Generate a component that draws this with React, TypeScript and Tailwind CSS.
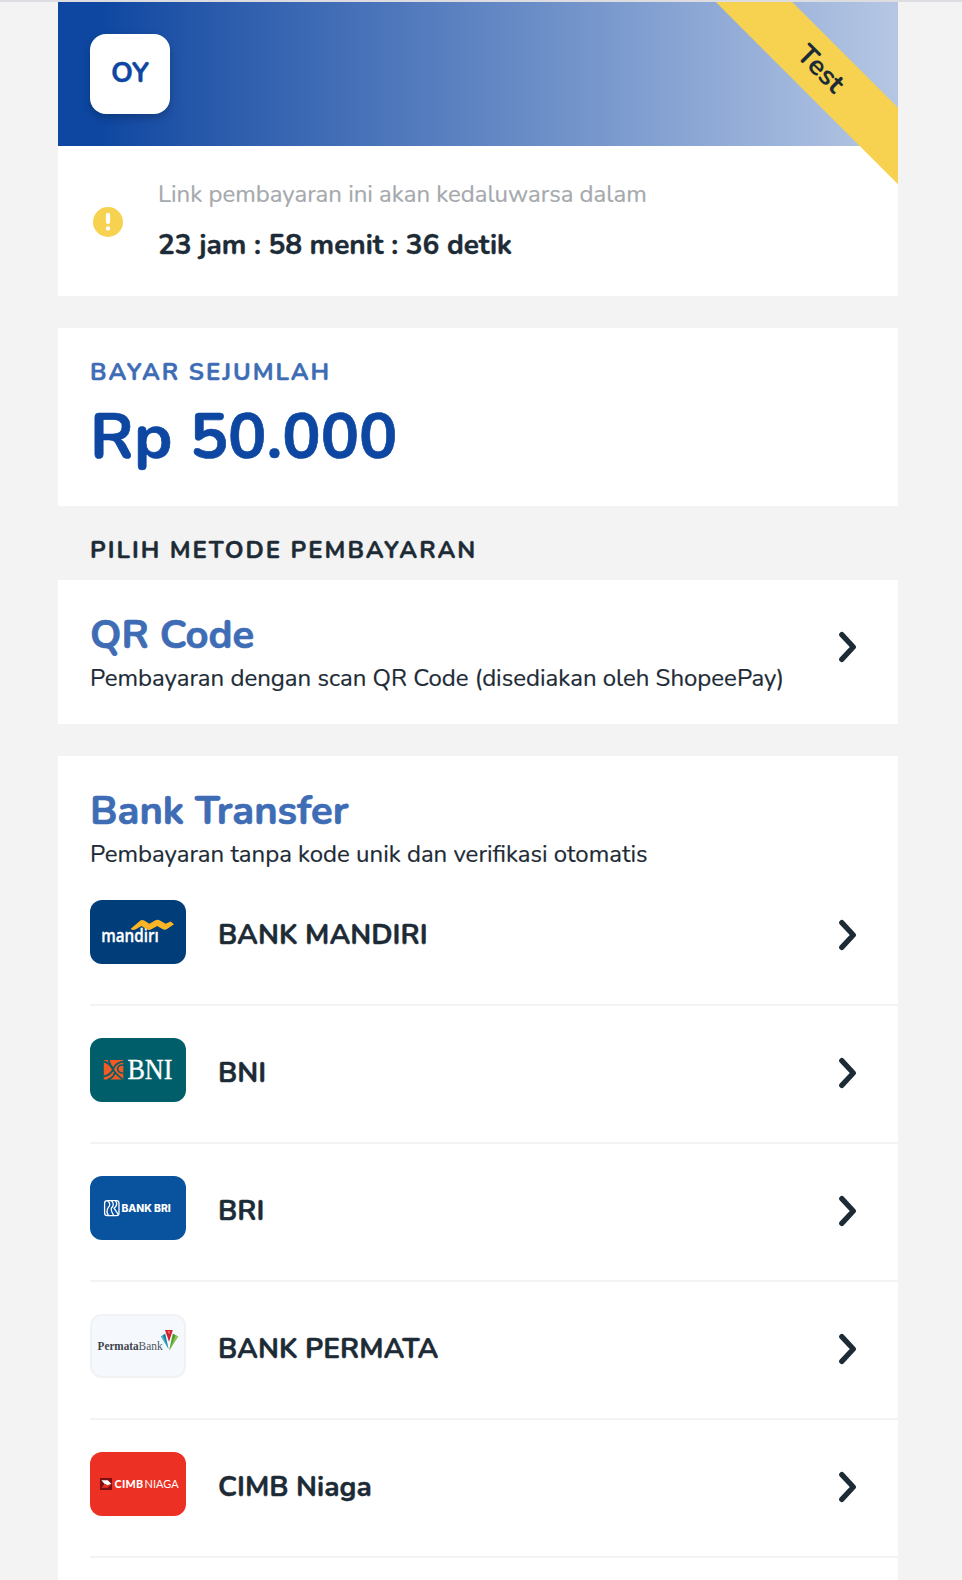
import type { ReactNode } from 'react';

function Chevron() {
  return (
    <svg width="32" height="32" viewBox="0 0 32 32" fill="none" className="shrink-0">
      <path d="M9.8 3.6 21.3 16 9.8 28.4" stroke="#1d2b36" strokeWidth="5.3" strokeLinecap="round" strokeLinejoin="round" />
    </svg>
  );
}

function AlertIcon() {
  return (
    <svg width="30" height="30" viewBox="0 0 30 30" className="mt-0.5 shrink-0">
      <circle cx="15" cy="15" r="15" fill="#f7d250" />
      <path d="M15 7.8v7.2" stroke="#fff" strokeWidth="4.2" strokeLinecap="round" />
      <circle cx="15" cy="21.4" r="2.2" fill="#fff" />
    </svg>
  );
}

function LogoFrame({ className, children }: { className: string; children: ReactNode }) {
  return (
    <div className={`h-16 w-24 shrink-0 overflow-hidden rounded-xl ${className}`}>
      <svg width="96" height="64" viewBox="0 0 96 64">
        {children}
      </svg>
    </div>
  );
}

function MandiriLogo() {
  return (
    <LogoFrame className="bg-[#003d79]">
      <text x="11.2" y="41.6" fontFamily="'Open Sans', sans-serif" fontWeight="600" fontSize="17.5" textLength="57.6" lengthAdjust="spacingAndGlyphs" fill="#fff" stroke="#fff" strokeWidth="0.35">
        mandiri
      </text>
      <path d="M56.9 26.5H70V31.2H56.9Z" fill="#003d79" />
      <path d="M40.5 29 49.5 21.2Q51.8 19.2 54.2 20.6L59.4 23.8 65 20.6Q67.5 19 70 20.4L75.6 23.8 80.6 21.4 84 24.2 77 29Q74.8 30.4 72.4 29L67.2 26 61.4 29.2Q59.2 30.6 56.8 29.2L51.4 26 45.4 29.6Q42.8 30.4 40.5 29Z" fill="#fdb525" />
    </LogoFrame>
  );
}

function BniLogo() {
  return (
    <LogoFrame className="bg-[#005e6a]">
      <path d="M13.8 21.9h19.5v19.5H13.8z" fill="#f15a23" />
      <g fill="none" stroke="#005e6a" strokeWidth="1.7">
        <path d="M13.4 23.4Q19.6 25 22.3 30.4T32.8 41.4" />
        <path d="M18.6 21.5Q19.6 27.4 23.4 31.2" />
        <path d="M13.4 38.6Q21 37 23.4 30.6T34 23.6" />
        <path d="M17.4 41.8Q24.2 39.4 25 33.8" />
        <path d="M33.8 27.2Q28 26.4 27.6 30.6 27.6 35 33.8 35.4" strokeWidth="1.4" />
      </g>
      <text x="37.4" y="41" fontFamily="'Liberation Serif', serif" fontSize="28.5" textLength="45" lengthAdjust="spacingAndGlyphs" fill="#fff" stroke="#fff" strokeWidth="0.3">
        BNI
      </text>
    </LogoFrame>
  );
}

function BriLogo() {
  return (
    <LogoFrame className="bg-[#09529d]">
      <rect x="14.6" y="24.6" width="14.4" height="15" rx="2.6" fill="none" stroke="#fff" strokeWidth="1.3" />
      <g fill="none" stroke="#fff" strokeWidth="1.3">
        <path d="M17.6 24.8Q21.6 28 18.2 31.6 15.6 35.4 18.6 39.6" />
        <path d="M21.4 24.8Q25.2 28.4 21.4 32 20.6 34.6 23.8 39.6" />
        <path d="M25.6 24.8Q28.4 28.8 24 32.2L28.6 38.8" />
      </g>
      <text x="31.4" y="36.2" fontFamily="Inter, sans-serif" fontWeight="800" fontSize="10.2" textLength="49.4" lengthAdjust="spacingAndGlyphs" fill="#fff">
        BANK BRI
      </text>
    </LogoFrame>
  );
}

function PermataLogo() {
  return (
    <LogoFrame className="bg-[#f5f9fd] shadow-[inset_0_0_0_2px_#f1f2f3]">
      <text x="7.6" y="36" fontFamily="'Liberation Serif', serif" fontWeight="700" fontSize="12" textLength="41" lengthAdjust="spacingAndGlyphs" fill="#3d444b">
        Permata
      </text>
      <text x="48.6" y="36" fontFamily="'Liberation Serif', serif" fontSize="12" textLength="24" lengthAdjust="spacingAndGlyphs" fill="#4c535a">
        Bank
      </text>
      <path d="M75 16h7.8L79 27.8z" fill="#d3202e" />
      <path d="M77.4 17.2h3L79 20z" fill="#ee7a78" />
      <path d="M71 22.4 75.2 19.4 78.6 35z" fill="#1784a8" />
      <path d="M71 22.4 73 22 78.6 35z" fill="#55b6cf" />
      <path d="M82.8 19.6 88 22.6 79.2 36.4z" fill="#4f9a34" />
      <path d="M85.6 21.2 88 22.6 79.2 36.4z" fill="#8fc549" />
    </LogoFrame>
  );
}

function CimbLogo() {
  return (
    <LogoFrame className="bg-[#ed3024]">
      <path d="M10 26h12v12H10z" fill="#7c0f12" />
      <path d="M11.4 28.2h6.4l3.6 3.8-3.8 1.2-3-1.2z" fill="#fff" />
      <path d="M21.4 32 17.8 35.8h-6.4l3.2-3.8 3 1.2z" fill="#ed3024" />
      <text x="24.6" y="35.8" fontFamily="Lato, sans-serif" fontWeight="900" fontSize="10.8" textLength="28.6" lengthAdjust="spacing" fill="#fff">
        CIMB
      </text>
      <text x="54.6" y="35.8" fontFamily="Lato, sans-serif" fontSize="10.8" textLength="34" lengthAdjust="spacingAndGlyphs" fill="#fff">
        NIAGA
      </text>
    </LogoFrame>
  );
}

const banks = [
  { name: 'BANK MANDIRI', Logo: MandiriLogo },
  { name: 'BNI', Logo: BniLogo },
  { name: 'BRI', Logo: BriLogo },
  { name: 'BANK PERMATA', Logo: PermataLogo },
  { name: 'CIMB Niaga', Logo: CimbLogo },
];

export default function App() {
  return (
    <div className="h-[1580px] overflow-hidden border-t-2 border-[#dcdce1] bg-[#f3f3f3] pr-16 pl-[58px] font-['Nunito',sans-serif] text-[#1d2b36]">
      <section className="relative h-[294px] overflow-hidden bg-white">
        <header className="h-36 bg-linear-to-r from-[#0d47a1] from-5% to-[#b6c7e4] px-8 pt-8">
          <div className="flex size-20 items-center justify-center rounded-2xl bg-white pb-[3px] text-[28px] font-bold text-[#0d47a1] shadow-[0_4px_8px_rgba(0,0,0,0.22)] [-webkit-text-stroke:0.4px]">
            OY
          </div>
        </header>
        <div className="flex items-center pt-8 pl-[35px]">
          <AlertIcon />
          <div className="ml-[35px]">
            <p className="text-2xl leading-[33px] text-[#a5a9ad] [-webkit-text-stroke:0.2px]">Link pembayaran ini akan kedaluwarsa dalam</p>
            <p className="mt-[15px] text-[28px] leading-[38px] font-bold [-webkit-text-stroke:0.4px]">23 jam : 58 menit : 36 detik</p>
          </div>
        </div>
        <div className="absolute top-10 left-[563px] flex h-[54px] w-[400px] rotate-45 items-center justify-center bg-[#f7d250] text-[28px] font-bold">
          Test
        </div>
      </section>

      <section className="mt-8 h-[178px] bg-white px-8 pt-7">
        <h2 className="text-2xl leading-8 font-bold tracking-[2px] text-[#3e6cb5] [-webkit-text-stroke:0.4px]">BAYAR SEJUMLAH</h2>
        <p className="mt-1 text-[64px] leading-[90px] font-bold text-[#0d47a1] [-webkit-text-stroke:0.7px]">Rp 50.000</p>
      </section>

      <h2 className="h-[74px] px-8 pt-7 text-2xl leading-8 font-bold tracking-[2px] [-webkit-text-stroke:0.4px]">PILIH METODE PEMBAYARAN</h2>

      <section className="flex h-36 items-start justify-between bg-white pt-7 pr-[34px] pl-8">
        <div>
          <h3 className="text-[40px] leading-[54px] font-bold text-[#3e6cb5] [-webkit-text-stroke:0.7px]">QR Code</h3>
          <p className="text-2xl leading-8 [-webkit-text-stroke:0.2px]">Pembayaran dengan scan QR Code (disediakan oleh ShopeePay)</p>
        </div>
        <div className="pt-[23px]">
          <Chevron />
        </div>
      </section>

      <section className="mt-8 h-[830px] bg-white pt-7 pl-8">
        <h3 className="text-[40px] leading-[54px] font-bold text-[#3e6cb5] [-webkit-text-stroke:0.7px]">Bank Transfer</h3>
        <p className="text-2xl leading-8 [-webkit-text-stroke:0.2px]">Pembayaran tanpa kode unik dan verifikasi otomatis</p>
        <ul className="mt-[30px] flex flex-col gap-8">
          {banks.map(({ name, Logo }) => (
            <li key={name} className="flex h-[106px] items-start border-b-2 border-[#f3f3f3] pr-[34px]">
              <Logo />
              <span className="mt-4 ml-8 flex-1 text-[28px] leading-[38px] font-bold [-webkit-text-stroke:0.4px]">{name}</span>
              <div className="pt-[19px]">
                <Chevron />
              </div>
            </li>
          ))}
        </ul>
      </section>
    </div>
  );
}
